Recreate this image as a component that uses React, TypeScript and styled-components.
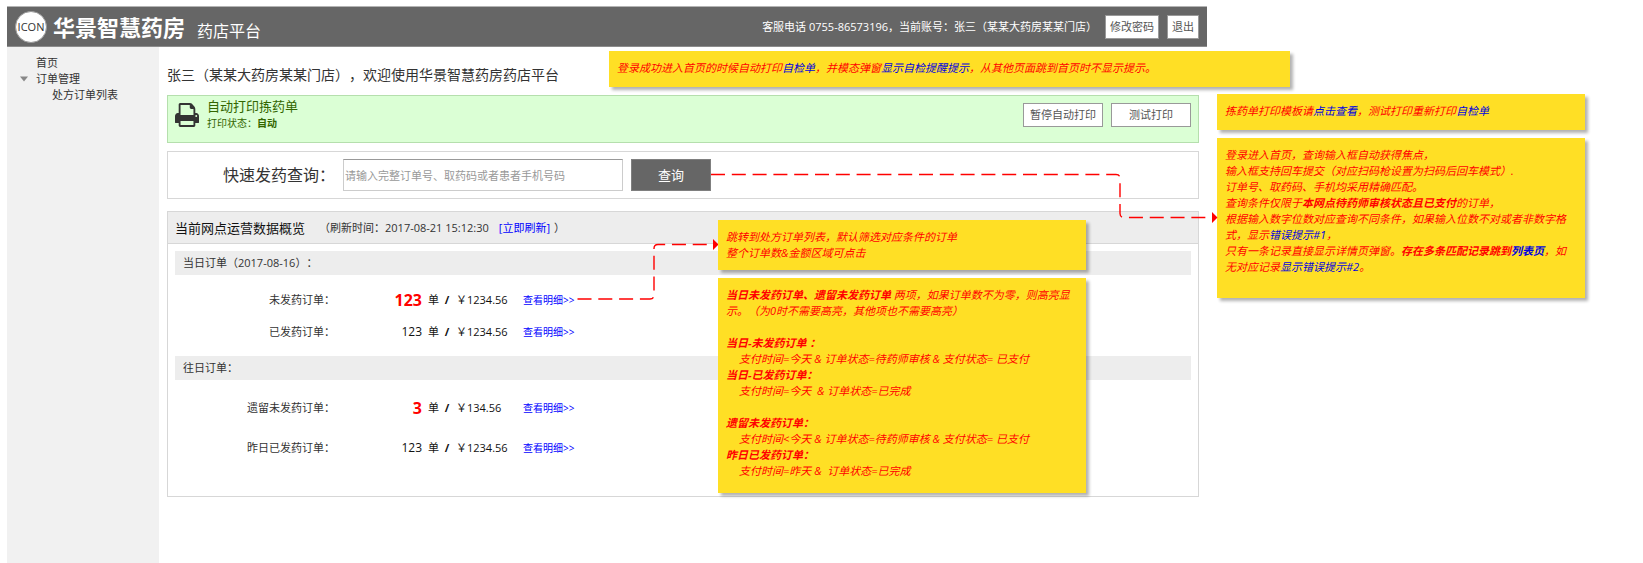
import React from "react";
import styled, { createGlobalStyle, css } from "styled-components";

const GlobalStyle = createGlobalStyle`
  * { box-sizing: border-box; }
  body {
    margin: 0;
    background: #fff;
    color: #333;
    font: 11px/16px "Open Sans", "Noto Sans CJK SC", sans-serif;
    text-spacing-trim: space-all;
  }
  button, input { font: inherit; }
  a { color: #0000ff; text-decoration: none; }
  h1, h2, h3, p, ul { margin: 0; padding: 0; font-weight: 400; }
  ul { list-style: none; }
`;

const Board = styled.div`
  display: flex;
  align-items: flex-start;
  gap: 10px;
  min-height: 100vh;
  padding: 6px 58px 0 7px;
`;

const Frame = styled.div`
  position: relative;
  flex: 1;
  display: flex;
  flex-direction: column;
  min-width: 1080px;
  min-height: calc(100vh - 6px);
`;

const Header = styled.header`
  display: flex;
  align-items: center;
  height: 41px;
  padding: 0 8px;
  background: #666;
  border-top: 1px solid #b4b4b4;
  border-bottom: 1px solid #8c8c8c;
  color: #fff;
`;

const Logo = styled.span`
  display: grid;
  place-items: center;
  width: 32px;
  height: 32px;
  margin-right: 6px;
  border: 1px solid #999;
  border-radius: 50%;
  background: #fff;
  color: #333;
  font-size: 11px;
`;

const Brand = styled.h1`
  margin-right: 12px;
  font-size: 22px;
  line-height: 32px;
  font-weight: 700;
`;

const Product = styled.span`
  flex: 1;
  padding-top: 8px;
  font-size: 16px;
  line-height: 24px;
`;

const Account = styled.span`
  margin-right: 8px;
`;

const Button = styled.button<{ $wide?: boolean }>`
  flex: none;
  width: ${(p) => (p.$wide ? "80px" : "auto")};
  height: 24px;
  padding: 0 4px;
  background: #fff;
  border: 1px solid #999;
  color: #555;
  line-height: 16px;
  & + & { margin-left: 8px; }
`;

const Body = styled.div`
  flex: 1;
  display: flex;
`;

const Sidebar = styled.nav`
  width: 152px;
  padding: 8px 0 0 13px;
  background: #f1f1f1;
`;

const MenuItem = styled.li<{ $nested?: boolean }>`
  display: flex;
  align-items: center;
  padding-left: ${(p) => (p.$nested ? "32px" : "0")};
  a { color: #333; }
`;

const Caret = styled.span<{ $hidden?: boolean }>`
  width: 16px;
  line-height: 0;
  visibility: ${(p) => (p.$hidden ? "hidden" : "visible")};
`;

const Main = styled.main`
  position: relative;
  flex: 1;
  padding: 18px 8px 0;
`;

const Welcome = styled.p`
  margin-bottom: 10px;
  font-size: 14px;
  line-height: 20px;
`;

const panel = css`
  border: 1px solid #d7d7d7;
  background: #fff;
`;

const PrintPanel = styled.section`
  display: flex;
  align-items: flex-start;
  height: 48px;
  margin-bottom: 8px;
  padding: 7px;
  border: 1px solid #b5dfad;
  background: #dbffd5;
  color: #336600;
`;

const PrintInfo = styled.div`
  flex: 1;
  margin: -5px 0 0 8px;
`;

const PrintTitle = styled.h2`
  font-size: 13px;
  line-height: 16px;
`;

const PrintState = styled.p`
  font-size: 10px;
  line-height: 18px;
`;

const SearchPanel = styled.form`
  ${panel}
  display: flex;
  align-items: center;
  height: 48px;
  margin-bottom: 12px;
  padding-left: 55px;
`;

const SearchLabel = styled.label`
  width: 120px;
  font-size: 16px;
  line-height: 24px;
`;

const SearchInput = styled.input`
  width: 280px;
  height: 32px;
  padding: 0 1px;
  border: 1px solid #ccc;
  border-top: 1px solid #999;
  border-radius: 0;
  background: #fff;
  outline: none;
  &::placeholder { color: #999; opacity: 1; }
`;

const SearchButton = styled.button`
  width: 80px;
  height: 32px;
  margin-left: 8px;
  border: 1px solid #7f7f7f;
  background: #666;
  color: #fff;
  font-size: 13px;
`;

const DataPanel = styled.section`
  ${panel}
  padding-bottom: 20px;
`;

const DataHeader = styled.div`
  display: flex;
  align-items: center;
  height: 32px;
  padding: 0 7px;
  background: #ededed;
  border-bottom: 1px solid #d7d7d7;
`;

const DataTitle = styled.h2`
  margin-right: 14px;
  color: #111;
  font-size: 13px;
  line-height: 20px;
`;

const RefreshLink = styled.a`
  margin: 0 4px 0 10px;
`;

const Group = styled.h3`
  height: 24px;
  margin: 7px 7px 0;
  padding: 0 8px;
  background: #ededed;
  font-size: 11px;
  line-height: 24px;
`;

const Stats = styled.table<{ $row: number; $above: number }>`
  margin: ${(p) => p.$above}px 0 8px;
  border-collapse: collapse;
  color: #111;
  td, th { height: ${(p) => p.$row}px; padding: 0; font-weight: 400; text-align: left; }
  th { width: 167px; color: #333; text-align: right; }
`;

const CountCell = styled.td<{ $alert?: boolean }>`
  && { width: 87px; text-align: right; }
  font-size: 12px;
  ${(p) => p.$alert && css`
    && { font-weight: 700; }
    color: #ff0000;
    font-size: 16px;
  `}
`;

const UnitCell = styled.td`
  && { width: 34px; padding-left: 6px; }
  white-space: pre;
`;

const AmountCell = styled.td`
  && { width: 67px; }
`;

const DetailCell = styled.td`
  font-size: 10px;
`;

const Note = styled.aside<{ $height: number }>`
  min-height: ${(p) => p.$height}px;
  padding: 9px 11px 9px 8px;
  background: #ffdf25;
  box-shadow: 3px 3px 3px rgba(0, 0, 0, 0.3);
  color: #ff0000;
  font-style: italic;
  a { color: #0000e0; }
`;

const WelcomeNote = styled(Note)`
  position: absolute;
  z-index: 2;
  top: 4px;
  left: 450px;
  right: -83px;
`;

const PanelNotes = styled.div`
  position: absolute;
  z-index: 2;
  top: 173px;
  left: 559px;
  width: 368px;
  display: flex;
  flex-direction: column;
  gap: 8px;
`;

const SideNotes = styled.div`
  flex: none;
  width: 368px;
  margin-top: 88px;
  display: flex;
  flex-direction: column;
  gap: 8px;
`;

const Rule = styled.p`
  padding-left: 13px;
  white-space: pre;
`;

const Blank = styled.div`
  height: 16px;
`;

const Connectors = styled.svg`
  position: absolute;
  z-index: 1;
  top: 0;
  left: 0;
  overflow: visible;
  pointer-events: none;
`;

function PrinterIcon() {
  return (
    <svg width="24" height="24" viewBox="64 128 1664 1536" preserveAspectRatio="none" fill="#333" aria-hidden="true">
      <path d="M448 1536h896v-256h-896v256zm0-640h896v-384h-160q-40 0-68-28t-28-68v-160h-640v640zm1152 64q0-26-19-45t-45-19-45 19-19 45 19 45 45 19 45-19 19-45zm128 0v416q0 13-9.5 22.5t-22.5 9.5h-224v160q0 40-28 68t-68 28h-960q-40 0-68-28t-28-68v-160h-224q-13 0-22.5-9.5t-9.5-22.5v-416q0-79 56.5-135.5t135.5-56.5h64v-544q0-40 28-68t68-28h672q40 0 88 20t76 48l152 152q28 28 48 76t20 88v256h64q79 0 135.5 56.5t56.5 135.5z" />
    </svg>
  );
}

type Stat = { label: string; count: string; amount: string; alert?: boolean };

const today: Stat[] = [
  { label: "未发药订单：", count: "123", amount: "￥1234.56", alert: true },
  { label: "已发药订单：", count: "123", amount: "￥1234.56" },
];

const earlier: Stat[] = [
  { label: "遗留未发药订单：", count: "3", amount: "￥134.56", alert: true },
  { label: "昨日已发药订单：", count: "123", amount: "￥1234.56" },
];

function StatTable({ rows, row, above }: { rows: Stat[]; row: number; above: number }) {
  return (
    <Stats $row={row} $above={above}>
      <tbody>
        {rows.map((s) => (
          <tr key={s.label}>
            <th scope="row">{s.label}</th>
            <CountCell $alert={s.alert}>{s.count}</CountCell>
            <UnitCell>单  <b>/</b></UnitCell>
            <AmountCell>{s.amount}</AmountCell>
            <DetailCell><a href="#detail">查看明细&gt;&gt;</a></DetailCell>
          </tr>
        ))}
      </tbody>
    </Stats>
  );
}

export default function App() {
  return (
    <>
      <GlobalStyle />
      <Board>
        <Frame>
          <Header>
            <Logo>ICON</Logo>
            <Brand>华景智慧药房</Brand>
            <Product>药店平台</Product>
            <Account>客服电话 0755-86573196，当前账号：张三（某某大药房某某门店）</Account>
            <Button>修改密码</Button>
            <Button>退出</Button>
          </Header>
          <Body>
            <Sidebar>
              <ul>
                <MenuItem><Caret $hidden /><a href="#home">首页</a></MenuItem>
                <MenuItem>
                  <Caret>
                    <svg width="8" height="6" viewBox="0 0 8 6"><path d="M0 .5h8L4 5.5z" fill="#888" /></svg>
                  </Caret>
                  <a href="#orders">订单管理</a>
                </MenuItem>
                <MenuItem $nested><a href="#list">处方订单列表</a></MenuItem>
              </ul>
            </Sidebar>
            <Main>
              <Welcome>张三（某某大药房某某门店），欢迎使用华景智慧药房药店平台</Welcome>
              <PrintPanel>
                <PrinterIcon />
                <PrintInfo>
                  <PrintTitle>自动打印拣药单</PrintTitle>
                  <PrintState>打印状态：<b>自动</b></PrintState>
                </PrintInfo>
                <Button $wide>暂停自动打印</Button>
                <Button $wide>测试打印</Button>
              </PrintPanel>
              <SearchPanel>
                <SearchLabel htmlFor="query">快速发药查询：</SearchLabel>
                <SearchInput id="query" placeholder="请输入完整订单号、取药码或者患者手机号码" />
                <SearchButton type="button">查询</SearchButton>
              </SearchPanel>
              <DataPanel>
                <DataHeader>
                  <DataTitle>当前网点运营数据概览</DataTitle>
                  <span>（刷新时间：2017-08-21 15:12:30</span>
                  <RefreshLink href="#refresh">[立即刷新]</RefreshLink>
                  <span>）</span>
                </DataHeader>
                <Group>当日订单（2017-08-16）：</Group>
                <StatTable rows={today} row={32} above={9} />
                <Group>往日订单：</Group>
                <StatTable rows={earlier} row={40} above={8} />
              </DataPanel>
              <WelcomeNote $height={36}>
                登录成功进入首页的时候自动打印<a href="#check">自检单</a>，并模态弹窗<a href="#tip">显示自检提醒提示</a>，从其他页面跳到首页时不显示提示。
              </WelcomeNote>
              <PanelNotes>
                <Note $height={50}>
                  <p>跳转到处方订单列表，默认筛选对应条件的订单</p>
                  <p>整个订单数&amp;金额区域可点击</p>
                </Note>
                <Note $height={215}>
                  <p><b>当日未发药订单、遗留未发药订单</b> 两项，如果订单数不为零，则高亮显示。（为0时不需要高亮，其他项也不需要高亮）</p>
                  <Blank />
                  <p><b>当日-未发药订单 ：</b></p>
                  <Rule>支付时间=今天 &amp; 订单状态=待药师审核 &amp; 支付状态= 已支付</Rule>
                  <p><b>当日-已发药订单：</b></p>
                  <Rule>{"支付时间=今天  & 订单状态=已完成"}</Rule>
                  <Blank />
                  <p><b>遗留未发药订单：</b></p>
                  <Rule>支付时间&lt;今天 &amp; 订单状态=待药师审核 &amp; 支付状态= 已支付</Rule>
                  <p><b>昨日已发药订单：</b></p>
                  <Rule>{"支付时间=昨天 &  订单状态=已完成"}</Rule>
                </Note>
              </PanelNotes>
            </Main>
          </Body>
          <Connectors width="1210" height="300" viewBox="0 0 1210 300" fill="none" aria-hidden="true">
            <g stroke="#ff0000" strokeWidth="1.4" strokeDasharray="14 6.8">
              <path d="M704 168.5H1109q4 0 4 4V207.5q0 4 4 4H1205" />
              <path d="M570.5 293H643q4 0 4-4V242.5q0-4 4-4H706" />
            </g>
            <path d="M1205 206l5.5 5.5-5.5 5.5zM706 233l5.5 5.5-5.5 5.5z" fill="#ff0000" />
          </Connectors>
        </Frame>
        <SideNotes>
          <Note $height={36}>
            拣药单打印模板请<a href="#template">点击查看</a>，测试打印重新打印<a href="#check">自检单</a>
          </Note>
          <Note $height={160}>
            <p>登录进入首页，查询输入框自动获得焦点，</p>
            <p>输入框支持回车提交（对应扫码枪设置为扫码后回车模式）.</p>
            <p>订单号、取药码、手机均采用精确匹配。</p>
            <p>查询条件仅限于<b>本网点待药师审核状态且已支付</b>的订单，</p>
            <p>根据输入数字位数对应查询不同条件，如果输入位数不对或者非数字格式，显示<a href="#error1">错误提示#1</a>，</p>
            <p>只有一条记录直接显示详情页弹窗。<b>存在多条匹配记录跳到<a href="#list">列表页</a></b>，如无对应记录<a href="#error2">显示错误提示#2</a>。</p>
          </Note>
        </SideNotes>
      </Board>
    </>
  );
}
